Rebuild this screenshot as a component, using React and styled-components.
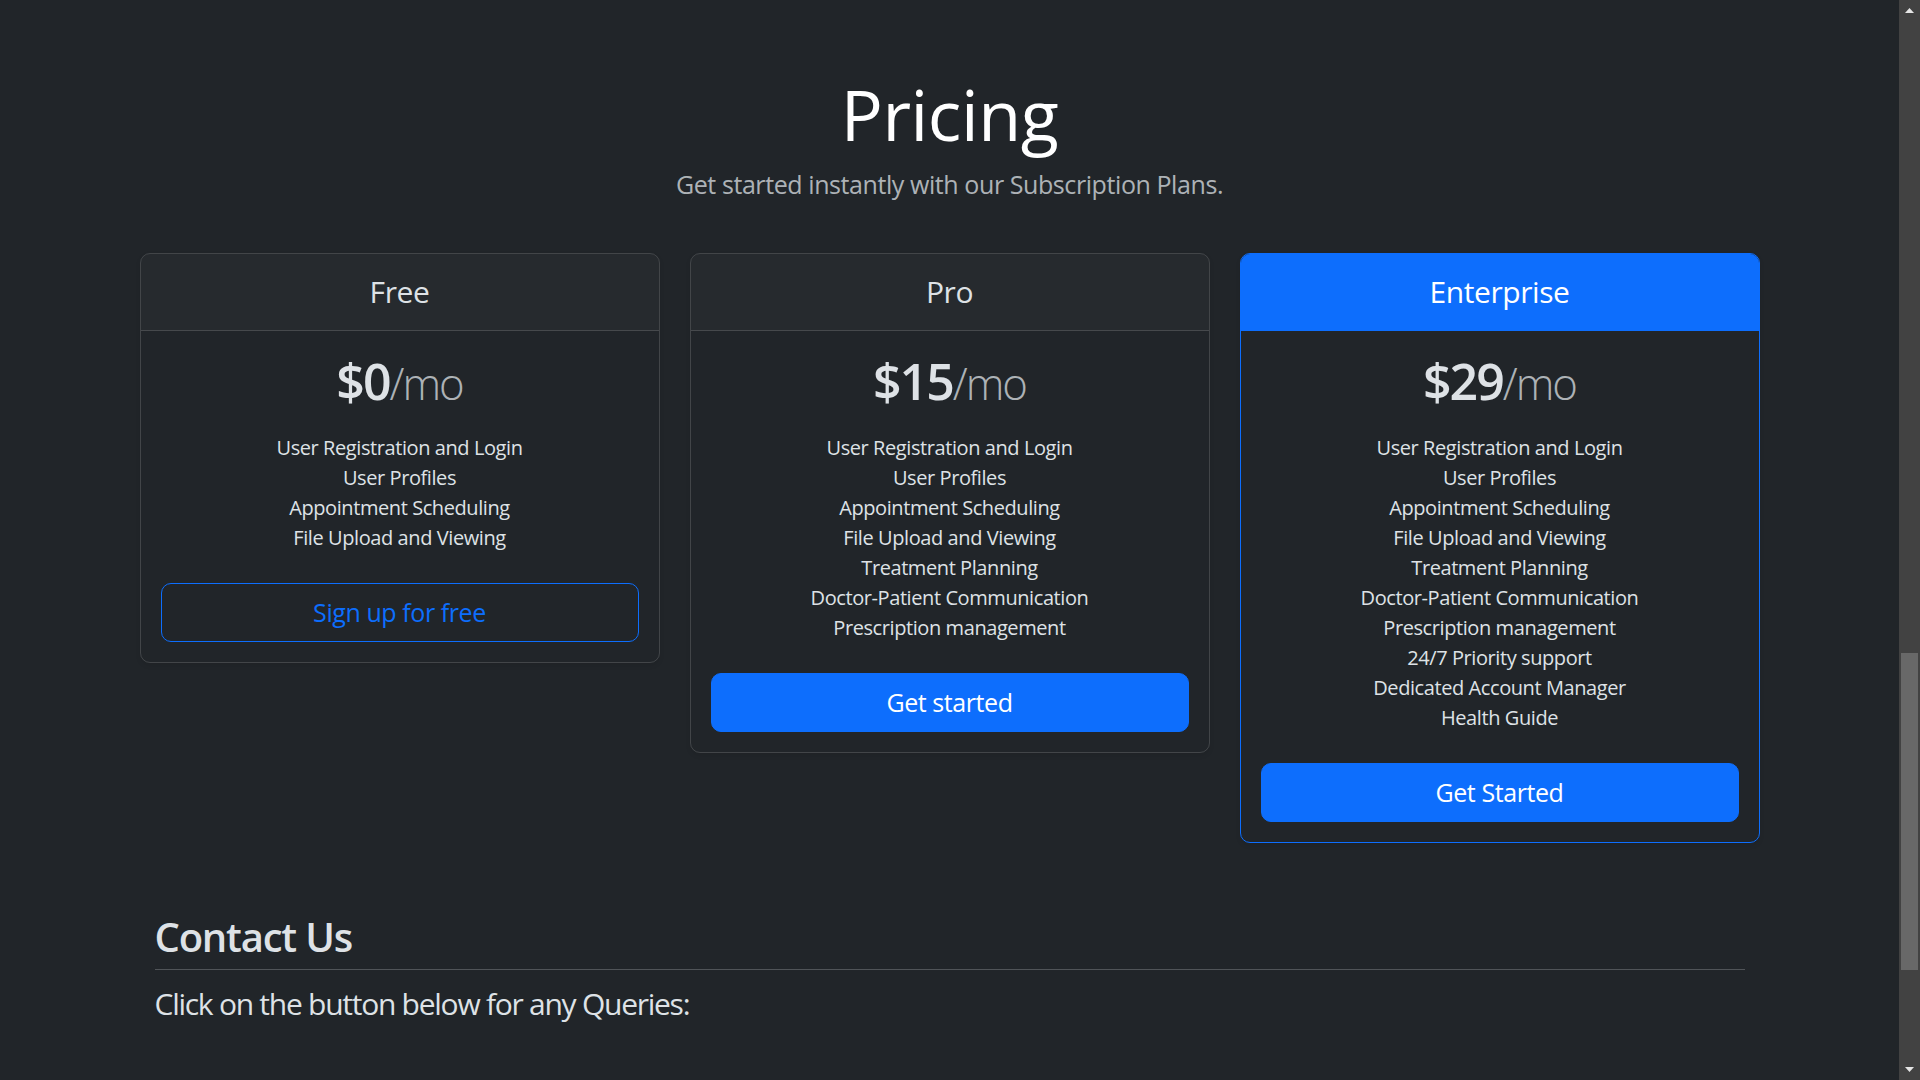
import React from "react";
import styled, { createGlobalStyle } from "styled-components";

const GlobalStyle = createGlobalStyle`
  *, *::before, *::after { box-sizing: border-box; }
  html, body {
    margin: 0;
    padding: 0;
    height: 100%;
    overflow: hidden;
    background: #212529;
  }
  body {
    font-family: "Open Sans", "Noto Sans", "Liberation Sans", sans-serif;
    letter-spacing: -0.026em;
    color: #dee2e6;
  }
`;

const Shell = styled.div`
  display: flex;
  height: 100vh;
`;

const Page = styled.div`
  flex: 1;
  min-width: 0;
  overflow: hidden;
`;

const Container = styled.div`
  max-width: 1650px;
  margin: 0 auto;
  padding: 0 15px;
`;

const PricingHeader = styled.header`
  padding: 72px 20px 29px;
  text-align: center;
`;

const Title = styled.h1`
  margin: 0 0 10px;
  font-size: 70px;
  line-height: 84px;
  font-weight: 400;
  color: #fff;
`;

const Lead = styled.p`
  margin: 0 0 20px;
  font-size: 25px;
  line-height: 37.5px;
  color: rgba(222, 226, 230, 0.75);
`;

const CardRow = styled.div`
  display: grid;
  grid-template-columns: repeat(3, 1fr);
  column-gap: 30px;
  align-items: start;
  text-align: center;
`;

const Card = styled.div`
  border: 1px solid ${(p) => (p.$featured ? "#0d6efd" : "rgba(255, 255, 255, 0.15)")};
  border-radius: 10px;
  box-shadow: 0 2.5px 5px rgba(0, 0, 0, 0.075);
`;

const CardHeader = styled.div`
  padding: 20px;
  border-radius: 9px 9px 0 0;
  border-bottom: 1px solid ${(p) => (p.$featured ? "#0d6efd" : "rgba(255, 255, 255, 0.15)")};
  background: ${(p) => (p.$featured ? "#0d6efd" : "rgba(222, 226, 230, 0.03)")};
  color: ${(p) => (p.$featured ? "#fff" : "#dee2e6")};
`;

const PlanName = styled.h4`
  margin: 0;
  font-size: 30px;
  line-height: 36px;
  font-weight: 400;
`;

const CardBody = styled.div`
  padding: 20px;
`;

const Price = styled.h1`
  margin: 0;
  font-size: 50px;
  line-height: 60px;
  font-weight: 600;
  letter-spacing: -0.04em;
  color: #dee2e6;
`;

const Per = styled.small`
  font-size: 43.75px;
  font-weight: 300;
  color: rgba(222, 226, 230, 0.75);
`;

const Features = styled.ul`
  list-style: none;
  padding: 0;
  margin: 20px 0 30px;
`;

const Feature = styled.li`
  font-size: 20px;
  line-height: 30px;
`;

const PlanButton = styled.button`
  display: block;
  width: 100%;
  padding: 10px 20px;
  font-family: inherit;
  letter-spacing: inherit;
  font-size: 25px;
  line-height: 37.5px;
  font-weight: 400;
  border-radius: 10px;
  border: 1px solid #0d6efd;
  background: ${(p) => (p.$outline ? "transparent" : "#0d6efd")};
  color: ${(p) => (p.$outline ? "#0d6efd" : "#fff")};
  cursor: pointer;
`;

const ContactSection = styled.section`
  padding: 70px 15px 0;
`;

const ContactTitle = styled.h2`
  margin: 0 0 8px;
  font-size: 40px;
  line-height: 48px;
  font-weight: 600;
  letter-spacing: -0.03em;
  color: #dee2e6;
`;

const Rule = styled.hr`
  margin: 0 0 11px;
  border: 0;
  border-top: 1px solid rgba(222, 226, 230, 0.25);
`;

const ContactText = styled.p`
  margin: 0;
  font-size: 30px;
  line-height: 45px;
  letter-spacing: -0.042em;
`;

const Scrollbar = styled.aside`
  width: 21px;
  flex: none;
  background: #424242;
  display: flex;
  flex-direction: column;
`;

const ScrollArrow = styled.div`
  height: 21px;
  flex: none;
  display: flex;
  align-items: center;
  justify-content: center;
  color: #e6e6e6;
`;

const ScrollTrack = styled.div`
  flex: 1;
  padding: 0 2px;
`;

const ScrollThumb = styled.div`
  margin-top: 632px;
  height: 317px;
  background: #686868;
`;

const base = [
  "User Registration and Login",
  "User Profiles",
  "Appointment Scheduling",
  "File Upload and Viewing",
];
const pro = [
  ...base,
  "Treatment Planning",
  "Doctor-Patient Communication",
  "Prescription management",
];
const enterprise = [
  ...pro,
  "24/7 Priority support",
  "Dedicated Account Manager",
  "Health Guide",
];

const plans = [
  { name: "Free", price: "$0", features: base, cta: "Sign up for free", outline: true },
  { name: "Pro", price: "$15", features: pro, cta: "Get started" },
  { name: "Enterprise", price: "$29", features: enterprise, cta: "Get Started", featured: true },
];

function Arrow({ down }) {
  return (
    <svg width="9" height="5" viewBox="0 0 9 5" aria-hidden="true">
      <polygon
        points={down ? "0,0 9,0 4.5,5" : "0,5 9,5 4.5,0"}
        fill="currentColor"
      />
    </svg>
  );
}

export default function App() {
  return (
    <>
      <GlobalStyle />
      <Shell>
        <Page>
          <Container>
            <PricingHeader>
              <Title>Pricing</Title>
              <Lead>Get started instantly with our Subscription Plans.</Lead>
            </PricingHeader>
            <CardRow>
              {plans.map((plan) => (
                <Card key={plan.name} $featured={plan.featured}>
                  <CardHeader $featured={plan.featured}>
                    <PlanName>{plan.name}</PlanName>
                  </CardHeader>
                  <CardBody>
                    <Price>
                      {plan.price}
                      <Per>/mo</Per>
                    </Price>
                    <Features>
                      {plan.features.map((f) => (
                        <Feature key={f}>{f}</Feature>
                      ))}
                    </Features>
                    <PlanButton type="button" $outline={plan.outline}>
                      {plan.cta}
                    </PlanButton>
                  </CardBody>
                </Card>
              ))}
            </CardRow>
            <ContactSection>
              <ContactTitle>Contact Us</ContactTitle>
              <Rule />
              <ContactText>Click on the button below for any Queries:</ContactText>
            </ContactSection>
          </Container>
        </Page>
        <Scrollbar>
          <ScrollArrow>
            <Arrow />
          </ScrollArrow>
          <ScrollTrack>
            <ScrollThumb />
          </ScrollTrack>
          <ScrollArrow>
            <Arrow down />
          </ScrollArrow>
        </Scrollbar>
      </Shell>
    </>
  );
}
